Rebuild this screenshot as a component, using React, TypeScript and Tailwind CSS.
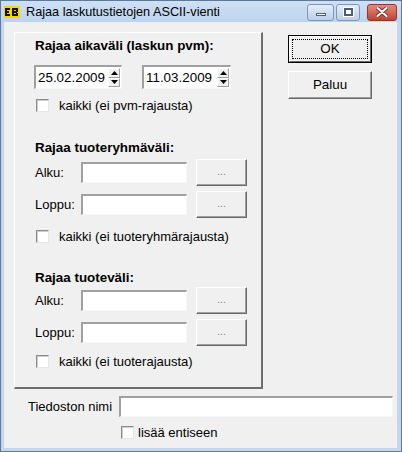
import React from "react";

const sunken =
  "bg-white border-t-2 border-l-2 border-b border-r border-t-[#a0a0a0] border-l-[#a0a0a0] border-b-[#f7f7f7] border-r-[#f7f7f7]";
const raised =
  "bg-[#f0f0f0] border border-t-white border-l-white border-r-[#696969] border-b-[#696969] shadow-[inset_-1px_-1px_0_#a0a0a0]";

function CheckBox({ label, gap = "ml-[10px]" }: { label: string; gap?: string }) {
  return (
    <div className="flex items-center h-[13px]">
      <div className="w-[13px] h-[13px] bg-white border border-t-[#8a8a8a] border-l-[#8a8a8a] border-b-[#e6e6e6] border-r-[#e6e6e6] shadow-[inset_1px_1px_0_#cfcfcf]" />
      <span className={`${gap} leading-[15px] whitespace-nowrap`}>{label}</span>
    </div>
  );
}

function Spinner() {
  return (
    <div className="flex flex-col w-[12px] h-full">
      {["up", "down"].map((d) => (
        <div key={d} className="flex-1 flex items-center justify-center bg-[#f0f0f0] border border-t-white border-l-white border-r-[#a0a0a0] border-b-[#a0a0a0]">
          <svg width="7" height="4" viewBox="0 0 7 4">
            {d === "up" ? <polygon points="3.5,0 7,4 0,4" fill="#000" /> : <polygon points="0,0 7,0 3.5,4" fill="#000" />}
          </svg>
        </div>
      ))}
    </div>
  );
}

function DateField({ value, width }: { value: string; width: string }) {
  return (
    <div className={`${sunken} ${width} h-[24px] flex items-center pl-[2px] pr-[1px] py-[1px]`}>
      <span className="flex-1 leading-[16px] text-[13.4px]">{value}</span>
      <Spinner />
    </div>
  );
}

function PickRow({ label, className }: { label: string; className: string }) {
  return (
    <div className={`flex items-center h-[27px] ${className}`}>
      <span className="w-[47px] pl-[1px]">{label}</span>
      <div className={`${sunken} w-[106px] h-[21px]`} />
      <button type="button" className={`${raised} ml-[9px] w-[51px] h-[27px] flex items-center justify-center text-[10px] text-[#808080] leading-none pb-[2px]`}>
        ...
      </button>
    </div>
  );
}

function TitleBar() {
  return (
    <div className="h-[21px] flex items-center bg-gradient-to-b from-[#cfe0f4] to-[#bdd3ee] pl-[3px] pr-[4px]">
      <svg width="16" height="12" viewBox="0 0 16 12" className="mt-[1px]">
        <rect x="0" y="0" width="16" height="12" fill="#f4d600" />
        <rect x="1" y="2" width="2" height="8" fill="#111" />
        <rect x="3" y="2" width="3" height="2" fill="#111" />
        <rect x="3" y="5" width="2" height="2" fill="#111" />
        <rect x="3" y="8" width="3" height="2" fill="#111" />
        <rect x="8" y="2" width="2" height="8" fill="#111" />
        <rect x="10" y="2" width="4" height="2" fill="#111" />
        <rect x="12" y="4" width="2" height="2" fill="#111" />
        <rect x="10" y="5" width="3" height="2" fill="#111" />
        <rect x="12" y="7" width="2" height="1" fill="#111" />
        <rect x="10" y="8" width="4" height="2" fill="#111" />
      </svg>
      <span className="ml-[6px] text-[12.7px] leading-[14px] text-black">Rajaa laskutustietojen ASCII-vienti</span>
      <div className="ml-auto flex items-center gap-[2px] mt-[1px]">
        <div className="w-[27px] h-[17px] rounded-[3px] border border-[#7f97b5] bg-gradient-to-b from-[#e4eefa] to-[#bccfe8] flex items-end justify-center pb-[4px]">
          <div className="w-[10px] h-[3px] bg-white border border-[#4a5f7c]" />
        </div>
        <div className="w-[24px] h-[17px] rounded-[3px] border border-[#7f97b5] bg-gradient-to-b from-[#e4eefa] to-[#bccfe8] flex items-center justify-center">
          <div className="w-[9px] h-[8px] border-2 border-[#4a5f7c] bg-white shadow-[0_0_0_1px_#fff]" />
        </div>
        <div className="ml-[5px] w-[30px] h-[17px] rounded-[3px] border border-[#8a3a30] bg-gradient-to-b from-[#e58a7c] to-[#c2402f] flex items-center justify-center">
          <svg width="12" height="10" viewBox="0 0 12 10">
            <path d="M1.5 1 L10.5 9 M10.5 1 L1.5 9" stroke="#7a2a22" strokeWidth="4" strokeLinecap="round" />
            <path d="M1.5 1 L10.5 9 M10.5 1 L1.5 9" stroke="#fff" strokeWidth="2.2" strokeLinecap="round" />
          </svg>
        </div>
      </div>
    </div>
  );
}

export default function App() {
  return (
    <div className="w-[402px] h-[452px] flex flex-col bg-[#c2d6ee] border border-[#5f7a99] overflow-hidden font-['Liberation_Sans',Arial,sans-serif] text-[13px] text-black">
      <TitleBar />
      <div className="flex-1 ml-[3px] mr-[4px] mb-[3px] bg-[#f0f0f0] pl-[10px] pt-[10px] flex flex-col">
        <div className="flex">
          <div className="w-[249px] h-[357px] border-t border-l border-r-2 border-b-2 border-t-white border-l-white border-r-[#6e6e6e] border-b-[#6e6e6e] pl-[19px] flex flex-col">
            <div className="mt-[5px] h-[16px] leading-[16px] font-bold text-[13.4px] pl-[1px]">Rajaa aikaväli (laskun pvm):</div>
            <div className="mt-[11px] flex gap-[20px]">
              <DateField value="25.02.2009" width="w-[88px]" />
              <DateField value="11.03.2009" width="w-[89px]" />
            </div>
            <div className="mt-[10px] ml-[2px]">
              <CheckBox label="kaikki (ei pvm-rajausta)" />
            </div>
            <div className="mt-[28px] h-[16px] leading-[16px] font-bold text-[13.4px] pl-[1px]">Rajaa tuoteryhmäväli:</div>
            <PickRow label="Alku:" className="mt-[3px]" />
            <PickRow label="Loppu:" className="mt-[5px]" />
            <div className="mt-[12px] ml-[2px]">
              <CheckBox label="kaikki (ei tuoteryhmärajausta)" />
            </div>
            <div className="mt-[27px] h-[16px] leading-[16px] font-bold text-[13.4px] pl-[1px]">Rajaa tuoteväli:</div>
            <PickRow label="Alku:" className="mt-[1px]" />
            <PickRow label="Loppu:" className="mt-[5px]" />
            <div className="mt-[9px] ml-[2px]">
              <CheckBox label="kaikki (ei tuoterajausta)" />
            </div>
          </div>
          <div className="ml-[25px] pt-[3px] flex flex-col gap-[8px]">
            <button type="button" className="w-[84px] h-[28px] border border-black p-0 bg-[#f0f0f0]">
              <div className="w-full h-full border border-t-white border-l-white border-r-[#696969] border-b-[#696969] p-[2px]">
                <div className="w-full h-full border border-dotted border-black flex items-center justify-center text-[13.4px] leading-none">OK</div>
              </div>
            </button>
            <button type="button" className={`${raised} w-[84px] h-[28px] flex items-center justify-center text-[13.4px] leading-none`}>
              Paluu
            </button>
          </div>
        </div>
        <div className="mt-[7px] ml-[14px] flex items-center h-[21px]">
          <span className="w-[91px] whitespace-nowrap">Tiedoston nimi</span>
          <div className={`${sunken} w-[274px] h-[21px]`} />
        </div>
        <div className="mt-[9px] ml-[107px]">
          <CheckBox label="lisää entiseen" gap="ml-[4px]" />
        </div>
      </div>
    </div>
  );
}
